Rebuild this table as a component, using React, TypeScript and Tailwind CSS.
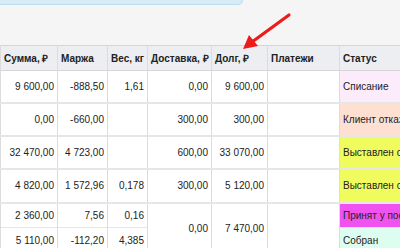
import React from 'react';

const num = 'px-[3px] text-right align-middle border-x border-[#dcdcdc]';
const txt = 'px-[3px] text-left align-middle border-x border-[#dcdcdc] whitespace-nowrap';
const row = 'border-b-2 border-[#e6e6e6]';

const Arrow: React.FC = () => (
  <svg className="absolute left-0 top-0 pointer-events-none" width="400" height="80" viewBox="0 0 400 80">
    <line x1="289" y1="15" x2="252" y2="42" stroke="#ee1b1b" strokeWidth="3.2" strokeLinecap="round" />
    <polygon points="243,49 249,35 258,46" fill="#ee1b1b" />
  </svg>
);

export default function App() {
  return (
    <div className="relative w-[400px] h-[248px] overflow-hidden bg-[#f5f5f5] text-[10px] text-[#222] font-['Liberation_Sans',Arial,sans-serif]">
      <div className="h-[45px]">
        <div className="w-[243px] h-[5px] bg-[#d6ebf6] border-b border-r border-[#bddcec] rounded-br-md" />
      </div>
      <table className="table-fixed border-collapse w-[520px] bg-white">
        <colgroup>
          <col className="w-[57px]" />
          <col className="w-[50px]" />
          <col className="w-[40px]" />
          <col className="w-[64px]" />
          <col className="w-[56px]" />
          <col className="w-[72px]" />
          <col className="w-[181px]" />
        </colgroup>
        <thead>
          <tr className="h-[25px] bg-[#eceef1] border-y border-[#d6d6d6] font-bold">
            <th className={txt}>Сумма, ₽</th>
            <th className={txt}>Маржа</th>
            <th className={txt}>Вес, кг</th>
            <th className={txt}>Доставка, ₽</th>
            <th className={txt}>Долг, ₽</th>
            <th className={txt}>Платежи</th>
            <th className={txt}>Статус</th>
          </tr>
        </thead>
        <tbody>
          <tr className={`h-[32px] ${row}`}>
            <td className={num}>9 600,00</td>
            <td className={num}>-888,50</td>
            <td className={num}>1,61</td>
            <td className={num}>0,00</td>
            <td className={num}>9 600,00</td>
            <td className={num}></td>
            <td className={`${txt} bg-[#fbebfb]`}>Списание</td>
          </tr>
          <tr className={`h-[33px] ${row}`}>
            <td className={num}>0,00</td>
            <td className={num}>-660,00</td>
            <td className={num}></td>
            <td className={num}>300,00</td>
            <td className={num}>300,00</td>
            <td className={num}></td>
            <td className={`${txt} bg-[#fde0d2]`}>Клиент отказался</td>
          </tr>
          <tr className={`h-[33px] ${row}`}>
            <td className={num}>32 470,00</td>
            <td className={num}>4 723,00</td>
            <td className={num}></td>
            <td className={num}>600,00</td>
            <td className={num}>33 070,00</td>
            <td className={num}></td>
            <td className={`${txt} bg-[#f0fc5e]`}>Выставлен счёт</td>
          </tr>
          <tr className={`h-[34px] ${row}`}>
            <td className={num}>4 820,00</td>
            <td className={num}>1 572,96</td>
            <td className={num}>0,178</td>
            <td className={num}>300,00</td>
            <td className={num}>5 120,00</td>
            <td className={num}></td>
            <td className={`${txt} bg-[#f0fc5e]`}>Выставлен счёт</td>
          </tr>
          <tr className="h-[25px] border-b border-[#e6e6e6]">
            <td className={num}>2 360,00</td>
            <td className={num}>7,56</td>
            <td className={num}>0,16</td>
            <td className={num} rowSpan={2}>0,00</td>
            <td className={num} rowSpan={2}>7 470,00</td>
            <td className={num} rowSpan={2}></td>
            <td className={`${txt} bg-[#f052f0]`}>Принят у поставщика</td>
          </tr>
          <tr className="h-[25px]">
            <td className={num}>5 110,00</td>
            <td className={num}>-112,20</td>
            <td className={num}>4,385</td>
            <td className={`${txt} bg-[#dcfdf0]`}>Собран</td>
          </tr>
        </tbody>
      </table>
      <Arrow />
    </div>
  );
}
